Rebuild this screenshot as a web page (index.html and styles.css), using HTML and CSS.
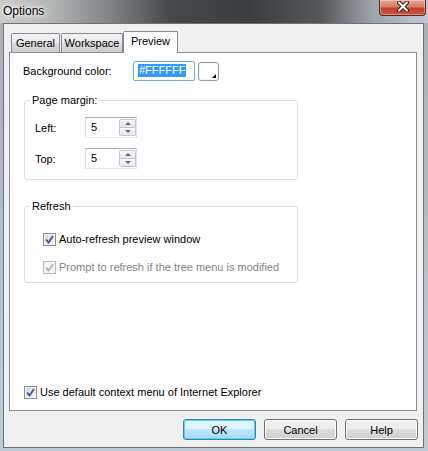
FILE: index.html
```html
<!DOCTYPE html>
<html>
<head>
  <title>Options</title>
  <meta charset="UTF-8">
  <link rel="stylesheet" href="styles.css">
</head>
<body>
  <div class="window">
    <div class="titlebar">
      <span class="title">Options</span>
      <span class="close">
        <svg width="14" height="11" viewBox="0 0 14 11">
          <path d="M3 1.5 L11 9.5 M11 1.5 L3 9.5" stroke="#3b1d19" stroke-width="4" stroke-linecap="round"/>
          <path d="M3 1.5 L11 9.5 M11 1.5 L3 9.5" stroke="#fff" stroke-width="2" stroke-linecap="round"/>
        </svg>
      </span>
    </div>

    <div class="client">
      <div class="tabs">
        <span class="tab tab-general">General</span>
        <span class="tab tab-workspace">Workspace</span>
        <span class="tab tab-preview active">Preview</span>
      </div>

      <div class="panel">
        <div class="bg-row">
          <label class="bg-label">Background color:</label>
          <span class="textbox"><span class="sel">#FFFFFF</span></span>
          <span class="color-btn"><span class="corner"></span></span>
        </div>

        <fieldset class="group margin-group">
          <legend>Page margin:</legend>
          <div class="spin-row">
            <label>Left:</label>
            <span class="spin"><span class="val">5</span><span class="arrows"><span class="up"></span><span class="down"></span></span></span>
          </div>
          <div class="spin-row">
            <label>Top:</label>
            <span class="spin"><span class="val">5</span><span class="arrows"><span class="up"></span><span class="down"></span></span></span>
          </div>
        </fieldset>

        <fieldset class="group refresh-group">
          <legend>Refresh</legend>
          <div class="check-row">
            <span class="check"><svg width="9" height="9" viewBox="0 0 9 9"><path d="M1 4.5 L3.5 7.5 L8 1" fill="none" stroke="#3c5598" stroke-width="1.8"/></svg></span>
            <span>Auto-refresh preview window</span>
          </div>
          <div class="check-row disabled">
            <span class="check"><svg width="9" height="9" viewBox="0 0 9 9"><path d="M1 4.5 L3.5 7.5 L8 1" fill="none" stroke="#b4b4b4" stroke-width="1.8"/></svg></span>
            <span>Prompt to refresh if the tree menu is modified</span>
          </div>
        </fieldset>

        <div class="check-row ie-row">
          <span class="check"><svg width="9" height="9" viewBox="0 0 9 9"><path d="M1 4.5 L3.5 7.5 L8 1" fill="none" stroke="#3c5598" stroke-width="1.8"/></svg></span>
          <span>Use default context menu of Internet Explorer</span>
        </div>
      </div>

      <div class="buttons">
        <button class="btn default">OK</button>
        <button class="btn">Cancel</button>
        <button class="btn">Help</button>
      </div>
    </div>
  </div>
</body>
</html>
```

FILE: styles.css
```css
*, *:before, *:after {
  box-sizing: border-box;
}

html, body {
  margin: 0;
  width: 428px;
  height: 451px;
  overflow: hidden;
}

body {
  background: linear-gradient(to bottom, #a9aeb3, #c3cbd3);
  font-family: "Liberation Sans", Arial, sans-serif;
  font-size: 11px;
  color: #000;
}

.window {
  display: flex;
  flex-direction: column;
  height: 451px;
}

/* title bar */
.titlebar {
  height: 23px;
  display: flex;
  align-items: flex-start;
  background: linear-gradient(to right, #c9cacb 0, #b5b6b7 50px, #7d7e7f 115px, #474849 170px, #3c3d3e 250px, #555759 320px, #9ea3a8 372px, #c2c9d0 428px);
}

.title {
  padding: 3px 0 0 3px;
  font-size: 12px;
  line-height: 16px;
  text-shadow: 0 0 6px #fff, 0 0 10px #fff, 0 0 3px #fff;
}

.close {
  margin-left: auto;
  margin-right: 2px;
  width: 47px;
  height: 16px;
  display: flex;
  align-items: center;
  justify-content: center;
  border: 1px solid #57251d;
  border-top: none;
  border-radius: 0 0 4px 4px;
  background: linear-gradient(to bottom, #e7a596 0, #d77a67 45%, #c2412a 55%, #c9553d 100%);
  box-shadow: inset 0 0 0 1px rgba(255,255,255,.35);
}

.close svg {
  margin-top: -2px;
}

/* client area */
.client {
  flex: 1;
  margin: 0 4px 3px 3px;
  border: 1px solid #6d7276;
  background: #f0f0f0;
  padding: 7px 6px 7px 5px;
  display: flex;
  flex-direction: column;
}

.tabs {
  display: flex;
  align-items: flex-end;
  margin-left: 2px;
  height: 21px;
}

.tab {
  height: 19px;
  display: flex;
  align-items: center;
  justify-content: center;
  border: 1px solid #898c95;
  border-bottom: none;
  border-radius: 2px 2px 0 0;
  background: linear-gradient(to bottom, #f2f2f2 0, #ebebeb 50%, #dddddd 50%, #cfcfcf 100%);
  padding-bottom: 1px;
}

.tab-general {
  width: 49px;
  margin-right: 1px;
}

.tab-workspace {
  width: 62px;
}

.tab-preview {
  width: 55px;
}

.tab.active {
  position: relative;
  height: 22px;
  margin-bottom: -1px;
  background: #fff;
  padding-bottom: 3px;
}

.panel {
  height: 359px;
  border: 1px solid #898c95;
  background: #fff;
  display: flex;
  flex-direction: column;
}

/* background color row */
.bg-row {
  display: flex;
  align-items: flex-start;
  margin: 8px 0 0 13px;
}

.bg-label {
  width: 110px;
  line-height: 20px;
}

.textbox {
  width: 62px;
  height: 20px;
  border: 1px solid #6fa8dc;
  border-radius: 2px;
  padding: 2px 0 0 4px;
  background: #fff;
}

.sel {
  display: inline-block;
  background: #3399ff;
  color: #fff;
  line-height: 13px;
  padding: 0 1px;
}

.color-btn {
  margin: 1px 0 0 3px;
  width: 21px;
  height: 19px;
  border: 1px solid #9a9a9a;
  border-radius: 3px;
  background: #fff;
  box-shadow: inset 0 0 0 1px #f4f4f4;
  display: flex;
  align-items: flex-end;
  justify-content: flex-end;
  padding: 0 2px 2px 0;
}

.corner {
  width: 0;
  height: 0;
  border-left: 4px solid transparent;
  border-bottom: 4px solid #000;
}

/* group boxes */
.group {
  margin: 0 0 0 14px;
  width: 274px;
  padding: 0;
  border: 1px solid #d5dfe5;
  border-radius: 3px;
}

.group legend {
  margin-left: 5px;
  padding: 0 2px;
  line-height: 13px;
}

.margin-group {
  margin-top: 13px;
  padding-bottom: 10px;
}

.spin-row {
  display: flex;
  align-items: center;
  margin: 10px 0 0 10px;
}

.spin-row label {
  width: 50px;
}

.spin {
  width: 52px;
  height: 21px;
  display: flex;
  border: 1px solid #abadb3;
  border-color: #abadb3 #dbdfe6 #e3e9ef #e2e3ea;
  background: #fff;
}

.val {
  flex: 1;
  padding-left: 5px;
  line-height: 19px;
}

.arrows {
  width: 17px;
  display: flex;
  flex-direction: column;
  padding: 1px 0 1px 0;
}

.arrows span {
  flex: 1;
  display: flex;
  align-items: center;
  justify-content: center;
  border: 1px solid #c3c8d0;
  background: linear-gradient(to bottom, #f8f8f8, #e4e7eb);
}

.arrows .up {
  border-radius: 2px 2px 0 0;
}

.arrows .down {
  border-top: none;
  border-radius: 0 0 2px 2px;
}

.arrows .up:after {
  content: "";
  border-left: 3px solid transparent;
  border-right: 3px solid transparent;
  border-bottom: 3px solid #56698c;
}

.arrows .down:after {
  content: "";
  border-left: 3px solid transparent;
  border-right: 3px solid transparent;
  border-top: 3px solid #56698c;
}

.refresh-group {
  margin-top: 20px;
  padding-bottom: 8px;
}

/* checkboxes */
.check-row {
  display: flex;
  align-items: center;
  gap: 3px;
  line-height: 13px;
}

.refresh-group .check-row {
  margin: 15px 0 0 18px;
}

.refresh-group .check-row:first-of-type {
  margin-top: 20px;
}

.check {
  width: 13px;
  height: 13px;
  border: 1px solid #8e8f8f;
  background: linear-gradient(135deg, #d2d5da, #f7f7f7);
  box-shadow: inset 0 0 0 1px #f4f4f4;
  display: flex;
  align-items: center;
  justify-content: center;
}

.check-row.disabled {
  color: #838383;
}

.check-row.disabled .check {
  border-color: #bcbcbc;
  background: #f4f4f4;
}

.ie-row {
  margin: auto 0 11px 14px;
}

/* dialog buttons */
.buttons {
  display: flex;
  justify-content: flex-end;
  gap: 8px;
  margin: 8px -1px 0 0;
}

.btn {
  width: 73px;
  height: 21px;
  font-family: "Liberation Sans", Arial, sans-serif;
  font-size: 11px;
  color: #000;
  border: 1px solid #707070;
  border-radius: 3px;
  background: linear-gradient(to bottom, #f2f2f2 0, #ebebeb 50%, #dddddd 50%, #cfcfcf 100%);
  box-shadow: inset 0 0 0 1px #fcfcfc;
  padding: 0;
}

.btn.default {
  border-color: #3c7fb1;
  background: linear-gradient(to bottom, #eaf6fd 0, #d9f0fc 50%, #bee6fd 50%, #a7d9f5 100%);
  box-shadow: inset 0 0 0 1px #48d7fc;
}
```
